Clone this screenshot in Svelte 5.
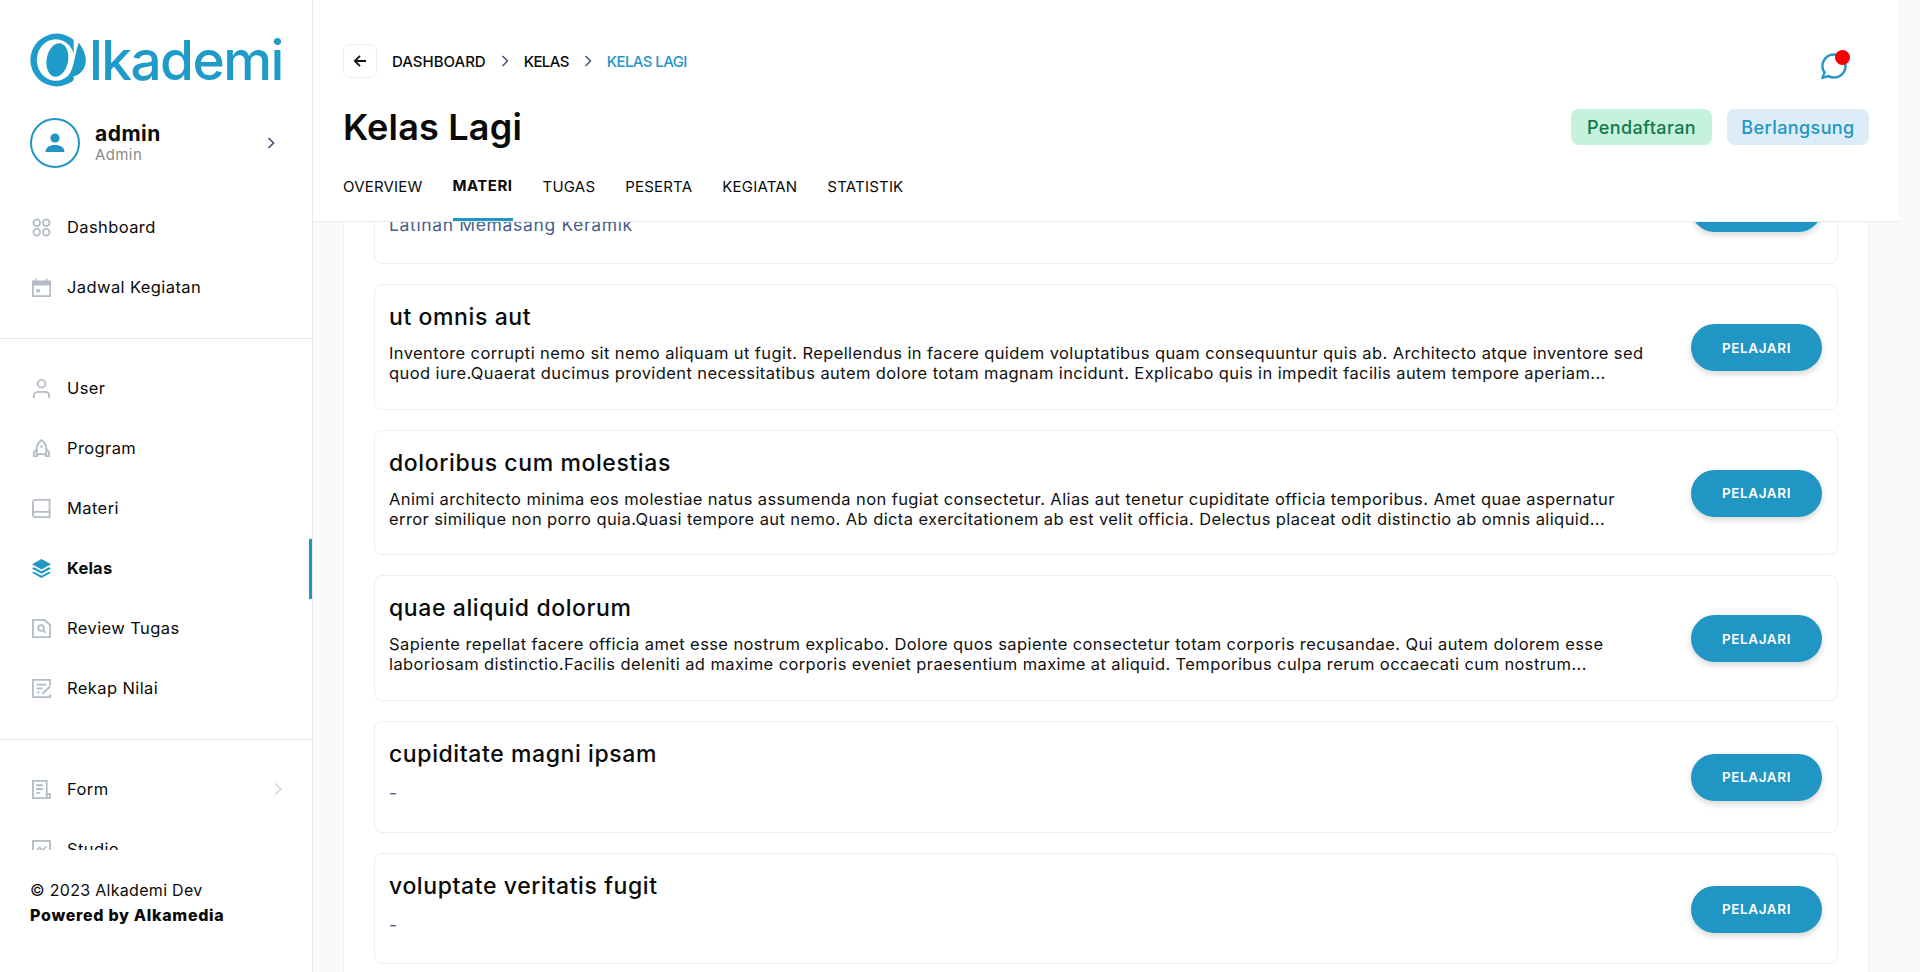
<script>
  const topMenu = [
    { label: "Dashboard", icon: "grid" },
    { label: "Jadwal Kegiatan", icon: "calendar" }
  ]
  const midMenu = [
    { label: "User", icon: "user" },
    { label: "Program", icon: "rocket" },
    { label: "Materi", icon: "book" },
    { label: "Kelas", icon: "layers", active: true },
    { label: "Review Tugas", icon: "review" },
    { label: "Rekap Nilai", icon: "edit" }
  ]
  const lowMenu = [
    { label: "Form", icon: "form", more: true },
    { label: "Studio", icon: "studio" }
  ]
  const tabs = ["OVERVIEW", "MATERI", "TUGAS", "PESERTA", "KEGIATAN", "STATISTIK"]
  const materi = [
    { title: "Memasang Keramik", lines: ["Latinan Memasang Keramik"], muted: true },
    { title: "ut omnis aut", lines: [
      "Inventore corrupti nemo sit nemo aliquam ut fugit. Repellendus in facere quidem voluptatibus quam consequuntur quis ab. Architecto atque inventore sed",
      "quod iure.Quaerat ducimus provident necessitatibus autem dolore totam magnam incidunt. Explicabo quis in impedit facilis autem tempore aperiam..."
    ] },
    { title: "doloribus cum molestias", lines: [
      "Animi architecto minima eos molestiae natus assumenda non fugiat consectetur. Alias aut tenetur cupiditate officia temporibus. Amet quae aspernatur",
      "error similique non porro quia.Quasi tempore aut nemo. Ab dicta exercitationem ab est velit officia. Delectus placeat odit distinctio ab omnis aliquid..."
    ] },
    { title: "quae aliquid dolorum", lines: [
      "Sapiente repellat facere officia amet esse nostrum explicabo. Dolore quos sapiente consectetur totam corporis recusandae. Qui autem dolorem esse",
      "laboriosam distinctio.Facilis deleniti ad maxime corporis eveniet praesentium maxime at aliquid. Temporibus culpa rerum occaecati cum nostrum..."
    ] },
    { title: "cupiditate magni ipsam", lines: ["-"], muted: true },
    { title: "voluptate veritatis fugit", lines: ["-"], muted: true }
  ]
</script>

{#snippet icon(name)}
  <svg class="ico" viewBox="0 0 20 20" fill="none" stroke="#b4bcc6" stroke-width="1.9">
    {#if name == "grid"}
      <circle cx="5" cy="5" r="3.5" /><circle cx="15" cy="5" r="3.500" />
      <circle cx="5" cy="15" r="3.500" /><circle cx="15" cy="15" r="3.500" />
    {:else if name == "calendar"}
      <path fill="#b4bcc6" stroke="none" d="M0 2.500h3.500V0.500h1.600v2h9.800V0.500h1.600v2H20V20H0zm1.800 5.500V18.200h16.400V8z" />
      <rect x="4.500" y="12" width="4" height="3" fill="#b4bcc6" stroke="none" />
    {:else if name == "user"}
      <circle cx="10" cy="5" r="4" />
      <path d="M2 20v-2.500c0-2.500 2-4 4.500-4h7c2.500 0 4.500 1.500 4.500 4V20" />
    {:else if name == "rocket"}
      <path d="M10 1c3.500 2.500 5 6 5 9.500V16H5v-5.500C5 7 6.500 3.500 10 1z" />
      <path d="M5 10.500l-3 3.500v4h3.500l1-2.500M15 10.500l3 3.500v4h-3.500l-1-2.500" />
      <circle cx="10" cy="8" r="1.300" fill="#b4bcc6" stroke="none" />
    {:else if name == "book"}
      <path d="M3.500 1h15v18h-15C2 19 1 18 1 16.500v-13C1 2 2 1 3.500 1z" />
      <path d="M1 16c0-1.500 1-2.500 2.500-2.500h15" />
    {:else if name == "layers"}
      <path fill="#2196c4" stroke="none" d="M10 0l10 5.500-10 5.500L0 5.500z" />
      <path fill="#2196c4" stroke="none" d="M2.200 8.800L10 13l7.800-4.200L20 10l-10 5.500L0 10z" />
      <path fill="#2196c4" stroke="none" d="M2.200 13.300L10 17.500l7.800-4.200 2.200 1.200L10 20 0 14.500z" />
    {:else if name == "review"}
      <path d="M1 1h12l6 5v13H1z" />
      <circle cx="9.500" cy="9.500" r="3" /><path d="M11.800 11.800l2.500 2.500" />
    {:else if name == "edit"}
      <path d="M19 7V1H1v18h18v-3" />
      <path d="M5 6h10M5 10h6M5 14h3" />
      <path d="M11 15.500l8-7.500" stroke-width="2.200" />
    {:else if name == "form"}
      <path d="M15.500 15V1H1v18h18v-4h-3.500v4" />
      <path d="M4.500 5.500h7M4.500 9.500h7M4.500 13.500h4" />
    {:else if name == "studio"}
      <rect x="1" y="1" width="18" height="18" />
      <path d="M4 12l4-4 3 3 4-4" />
    {/if}
  </svg>
{/snippet}

{#snippet row(item)}
  <li class="row" class:active={item.active}>
    {@render icon(item.icon)}
    <span>{item.label}</span>
    {#if item.more}
      <svg class="more" viewBox="0 0 10 14" fill="none" stroke="#d3d8de" stroke-width="1.6"><path d="M2 1.500L8 7l-6 5.500" /></svg>
    {/if}
  </li>
{/snippet}

<div class="page">
  <aside>
    <div class="logo">
      <svg viewBox="18 24 175 162" width="57" height="54">
        <circle cx="100" cy="105" r="81" fill="#1e9bc9" />
        <rect x="152" y="20" width="50" height="170" fill="#fff" />
        <ellipse cx="97" cy="105" rx="58" ry="64" fill="#fff" />
        <ellipse cx="102" cy="105" rx="33" ry="52" fill="#1e9bc9" transform="rotate(10 102 105)" />
        <path fill="#1e9bc9" d="M168 52C185 75 195 100 186 125C176 150 150 162 138 150C155 125 155 85 168 52Z" />
      </svg>
      <span>lkademi</span>
    </div>

    <div class="who">
      <div class="avatar">
        <svg viewBox="0 0 20 20" width="20" height="20" fill="#2196c4">
          <circle cx="10" cy="5" r="4.600" />
          <path d="M0.500 19c0-4.500 4-7 9.500-7s9.500 2.500 9.500 7z" />
        </svg>
      </div>
      <div class="who-text">
        <b>admin</b>
        <small>Admin</small>
      </div>
      <svg class="who-more" viewBox="0 0 10 14" fill="none" stroke="#46547c" stroke-width="1.700"><path d="M2.500 2L7.500 7l-5 5" /></svg>
    </div>

    <div class="nav">
      <ul>
        {#each topMenu as item}
          {@render row(item)}
        {/each}
      </ul>
      <hr />
      <ul>
        {#each midMenu as item}
          {@render row(item)}
        {/each}
      </ul>
      <hr />
      <ul>
        {#each lowMenu as item}
          {@render row(item)}
        {/each}
      </ul>
    </div>

    <footer>
      <div>© 2023 Alkademi Dev</div>
      <strong>Powered by Alkamedia</strong>
    </footer>
  </aside>

  <main>
    <header>
      <div class="crumbs">
        <button class="back" aria-label="Kembali">
          <svg viewBox="0 0 14 14" width="14" height="14" fill="none" stroke="#111" stroke-width="1.800"><path d="M13 7H2M7 1.800L1.800 7 7 12.200" /></svg>
        </button>
        <span class="crumb first">DASHBOARD</span>
        <svg class="sep" viewBox="0 0 10 14" fill="none" stroke="#46547c" stroke-width="1.500"><path d="M2.500 2L7.500 7l-5 5" /></svg>
        <span class="crumb">KELAS</span>
        <svg class="sep" viewBox="0 0 10 14" fill="none" stroke="#46547c" stroke-width="1.500"><path d="M2.500 2L7.500 7l-5 5" /></svg>
        <span class="crumb current">KELAS LAGI</span>
        <div class="chat">
          <svg viewBox="0 0 26 26" width="26" height="26" fill="none" stroke="#2196c4" stroke-width="2.400">
            <path d="M13 1.500a11.500 11.500 0 1 1-5.500 21.600L1.500 24.800l2-5.300A11.500 11.500 0 0 1 13 1.500z" />
          </svg>
          <i></i>
        </div>
      </div>

      <div class="title-row">
        <h1>Kelas Lagi</h1>
        <div class="badges">
          <span class="badge green">Pendaftaran</span>
          <span class="badge blue">Berlangsung</span>
        </div>
      </div>

      <nav>
        {#each tabs as tab}
          <span class="tab" class:on={tab == "MATERI"}>{tab}</span>
        {/each}
      </nav>
    </header>

    <section class="scroll">
      <div class="panel">
        {#each materi as m}
          <article class="card">
            <div class="card-text">
              <h3>{m.title}</h3>
              <p class:muted={m.muted}>
                {#each m.lines as line}
                  <span>{line}</span>
                {/each}
              </p>
            </div>
            <button class="go">PELAJARI</button>
          </article>
        {/each}
      </div>
    </section>
  </main>
</div>

<style>
  :global(body) {
    margin: 0;
    background: #fafafa;
    font-family: "Inter", "Noto Sans", sans-serif;
    color: #0a0a0a;
  }
  .page {
    display: flex;
    height: 972px;
    overflow: hidden;
  }
  aside {
    width: 313px;
    flex: none;
    box-sizing: border-box;
    background: #fff;
    border-right: 1px solid #e6e8ea;
    display: flex;
    flex-direction: column;
  }
  .logo {
    display: flex;
    align-items: center;
    height: 57px;
    margin: 31px 0 0 30px;
    color: #1e9bc9;
  }
  .logo span {
    font-family: "Inter", sans-serif;
    font-size: 55px;
    font-weight: 500;
    line-height: 57px;
    margin: 2px 0 0 2px;
    letter-spacing: -1.6px;
  }
  .who {
    display: flex;
    align-items: center;
    height: 50px;
    margin: 30px 0 0 30px;
  }
  .avatar {
    width: 50px;
    height: 50px;
    box-sizing: border-box;
    border: 2px solid #2196c4;
    border-radius: 50%;
    display: flex;
    align-items: center;
    justify-content: center;
  }
  .who-text {
    margin-left: 15px;
    display: flex;
    flex-direction: column;
    flex: 1;
  }
  .who-text b {
    font-size: 21px;
    line-height: 24px;
    font-weight: 700;
    letter-spacing: 0.5px;
  }
  .who-text small {
    font-size: 15px;
    line-height: 18px;
    color: #8b8b8b;
    letter-spacing: 0.4px;
  }
  .who-more {
    width: 10px;
    height: 14px;
    margin-right: 36px;
  }
  .nav {
    height: 653px;
    margin-top: 29px;
    overflow: hidden;
  }
  ul {
    list-style: none;
    margin: 0;
    padding: 0;
  }
  hr {
    border: none;
    border-top: 1px solid #e6e8ea;
    margin: 21px 0 19px;
  }
  .row {
    position: relative;
    display: flex;
    align-items: center;
    height: 60px;
    padding-left: 32px;
    font-size: 16.500px;
    letter-spacing: 0.4px;
  }
  .row .ico {
    width: 19px;
    height: 19px;
    margin-right: 16px;
    flex: none;
  }
  .row.active {
    font-weight: 700;
    letter-spacing: 0.2px;
  }
  .row.active::after {
    content: "";
    position: absolute;
    right: 0;
    top: 1px;
    width: 3px;
    height: 60px;
    background: #2196c4;
  }
  .more {
    width: 10px;
    height: 14px;
    margin-left: auto;
    margin-right: 29px;
  }
  footer {
    padding: 28px 0 0 30px;
    font-size: 16px;
    line-height: 25px;
    letter-spacing: 0.3px;
  }
  footer strong {
    font-weight: 800;
    letter-spacing: 0.7px;
  }
  main {
    flex: 1;
    display: flex;
    flex-direction: column;
    min-width: 0;
  }
  header {
    position: relative;
    z-index: 1;
    width: 1586px;
    height: 222px;
    box-sizing: border-box;
    padding: 44px 30px 0;
    background: #fff;
    border-bottom: 1px solid #e9ebed;
  }
  .crumbs {
    display: flex;
    align-items: center;
    height: 34px;
  }
  .back {
    width: 34px;
    height: 34px;
    padding: 0;
    box-sizing: border-box;
    background: #fff;
    border: 1px solid #eceef0;
    border-radius: 7px;
    display: flex;
    align-items: center;
    justify-content: center;
  }
  .crumb {
    font-size: 15px;
    font-weight: 500;
    letter-spacing: -0.6px;
  }
  .crumb.first {
    margin-left: 15px;
    letter-spacing: 0;
  }
  .crumb.current {
    color: #2196c4;
  }
  .sep {
    width: 10px;
    height: 14px;
    margin: 0 14px;
  }
  .chat {
    position: relative;
    margin-left: auto;
    margin-right: 22px;
    margin-top: 10px;
    height: 26px;
  }
  .chat i {
    position: absolute;
    top: -3px;
    right: -3px;
    width: 15px;
    height: 15px;
    border-radius: 50%;
    background: #f80000;
  }
  .title-row {
    display: flex;
    align-items: center;
    justify-content: space-between;
    margin-top: 22px;
    height: 54px;
  }
  h1 {
    margin: 0;
    font-size: 36px;
    font-weight: 600;
    line-height: 54px;
    letter-spacing: 0.2px;
  }
  .badges {
    display: flex;
    gap: 15px;
  }
  .badge {
    display: flex;
    align-items: center;
    justify-content: center;
    height: 36px;
    width: 141px;
    border-radius: 8px;
    font-size: 18px;
    font-weight: 500;
    letter-spacing: 0.4px;
  }
  .green {
    background: #c6f1dc;
    color: #0f7a4b;
  }
  .blue {
    width: 142px;
    background: #dcedf7;
    color: #2196c4;
  }
  nav {
    display: flex;
    gap: 30px;
    margin-top: 21px;
  }
  .tab {
    font-size: 15px;
    line-height: 24px;
    letter-spacing: 0.2px;
    padding-bottom: 19px;
    border-bottom: 3px solid transparent;
  }
  .tab.on {
    font-weight: 700;
    letter-spacing: 0.5px;
    border-bottom-color: #2196c4;
    line-height: 22px;
    padding-bottom: 21px;
  }
  .scroll {
    flex: 1;
    width: 1586px;
    box-sizing: border-box;
    padding: 0 30px;
    overflow: hidden;
  }
  .panel {
    margin-top: -100px;
    padding: 29.600px 30px 30px;
    background: #fff;
    border: 1px solid #eceef0;
    display: flex;
    flex-direction: column;
    gap: 20px;
  }
  .card {
    display: flex;
    align-items: center;
    justify-content: space-between;
    flex: none;
    padding: 0 15px 0 14px;
    border: 1px solid #eceef0;
    border-radius: 8px;
    background: #fff;
  }
  .card-text {
    padding-top: 15px;
  }
  h3 {
    margin: 0;
    font-size: 23px;
    font-weight: 500;
    line-height: 34px;
    letter-spacing: 0.6px;
  }
  p {
    margin: 9px 0 0;
    padding-bottom: 25.600px;
    font-size: 16.500px;
    letter-spacing: 0.4px;
    line-height: 20px;
    white-space: nowrap;
    color: #111;
  }
  p span {
    display: block;
  }
  p.muted {
    margin-top: 12px;
    padding-bottom: 28.700px;
    color: #4a5f8d;
    font-size: 17.500px;
    letter-spacing: 0.65px;
  }
  .go {
    width: 131px;
    height: 47px;
    margin-top: 1px;
    flex: none;
    border: none;
    border-radius: 24px;
    background: #2196c4;
    color: #fff;
    font: 600 13.500px "Inter", sans-serif;
    letter-spacing: 0.6px;
    box-shadow: 0 3px 6px rgba(0, 0, 0, 0.16);
  }
</style>
